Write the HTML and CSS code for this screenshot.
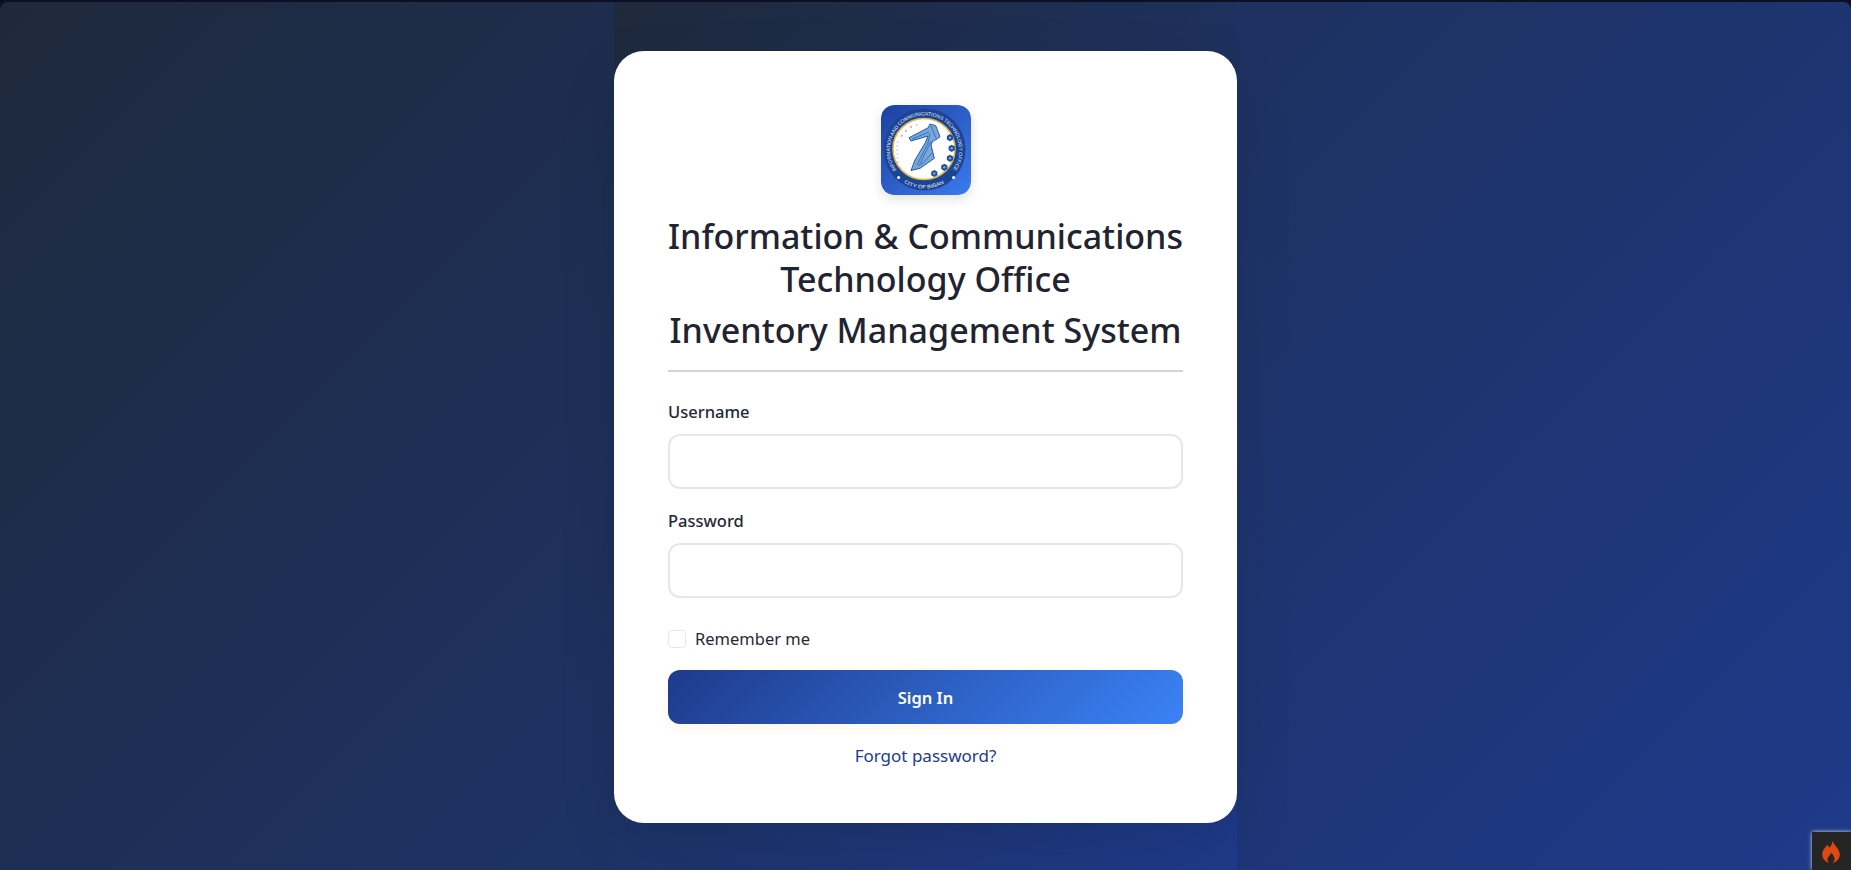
FILE: index.html
```html
<!DOCTYPE html>
<html lang="en">
<head>
    <meta charset="UTF-8">
    <meta name="viewport" content="width=device-width, initial-scale=1.0">
    <title>Inventory Management System</title>
    <link rel="stylesheet" href="styles.css">
</head>
<body>
    <div class="page">
        <main class="login-column">
            <div class="login-card">
                <svg class="logo" viewBox="0 0 90 90" role="img" aria-label="ICT Office seal">
                    <defs>
                        <linearGradient id="logoBg" x1="0" y1="0" x2="1" y2="1">
                            <stop offset="0" stop-color="#1e40a0"/>
                            <stop offset="1" stop-color="#3b7bee"/>
                        </linearGradient>
                        <path id="ringTop" d="M15.5 65 A34.5 34.5 0 1 1 71.5 65"/>
                        <path id="ringBottom" d="M23 77.7 A39 39 0 0 0 64 77.7"/>
                        <g id="badge">
                            <polygon points="0,-3.6 3.1,-1.8 3.1,1.8 0,3.6 -3.1,1.8 -3.1,-1.8" fill="#1d4f9f"/>
                            <circle r="1.2" fill="#7fa6d8"/>
                        </g>
                    </defs>
                    <rect width="90" height="90" rx="13" fill="url(#logoBg)"/>
                    <circle cx="43.5" cy="44.5" r="41" fill="#1b4494"/>
                    <ellipse cx="43" cy="44" rx="31" ry="30.5" fill="#fff" stroke="#e3b94a" stroke-width="1.6"/>
                    <text class="seal-text" textLength="150" lengthAdjust="spacingAndGlyphs"><textPath href="#ringTop">INFORMATION AND COMMUNICATIONS TECHNOLOGY OFFICE</textPath></text>
                    <text class="seal-text" textLength="42" lengthAdjust="spacingAndGlyphs"><textPath href="#ringBottom">CITY OF BIÑAN</textPath></text>
                    <path class="seal-ones" d="M16 57 h2 M15.6 53 h2 M15.3 49 h2 M15.2 45 h2 M15.3 41 h2 M15.8 37 h2"/>
                    <g class="seal-zeros">
                        <circle cx="20.7" cy="30.7" r=".8"/>
                        <circle cx="25" cy="26" r=".8"/>
                        <circle cx="30" cy="22" r=".8"/>
                    </g>
                    <path class="seal-ones" d="M35.7 19 v2"/>
                    <path class="seal-key" d="M28 32.7 L47.3 22.7 L49 19 L54.7 20.7 L59 31.7 L56 34 L51.5 36.5 L50 40 L53.3 53.3 L39 63.3 L30 65.5 L34 55 L44 38.3 L47 31 L30 36 Z"/>
                    <path class="seal-key-lines" d="M31 34 L48 27 M50 21 L55 33 M49 28 L47 38 L36 60 M50 36 L38 61 M51 48 L40 60"/>
                    <use href="#badge" x="69" y="32.7"/>
                    <use href="#badge" x="70.7" y="43.3"/>
                    <use href="#badge" x="69" y="53.3"/>
                    <use href="#badge" x="63.3" y="62.3"/>
                    <use href="#badge" x="53.3" y="68.5"/>
                    <circle cx="17.6" cy="72.6" r="1.5" fill="#fff"/>
                    <circle cx="72.6" cy="72.6" r="1.5" fill="#fff"/>
                </svg>
                <h1 class="org-title">Information &amp; Communications<br>Technology Office</h1>
                <h2 class="app-title">Inventory Management System</h2>
                <form class="login-form">
                    <label class="field-label" for="username">Username</label>
                    <input class="field-input" type="text" id="username" name="username">
                    <label class="field-label" for="password">Password</label>
                    <input class="field-input" type="password" id="password" name="password">
                    <label class="remember">
                        <input class="remember-box" type="checkbox" name="remember">
                        Remember me
                    </label>
                    <button class="sign-in" type="button">Sign In</button>
                </form>
                <a class="forgot" href="#">Forgot password?</a>
            </div>
        </main>
    </div>
    <div class="debug-toolbar">
        <svg class="debug-flame" viewBox="0 0 16 21" aria-hidden="true">
            <path fill-rule="evenodd" d="M8.6 0 C9.6 3.2 8.4 5 6.6 7 C5.8 6.2 5.2 5.4 5 4.4 C2 7 0 9.6 0 13 C0 17 2.8 20 6.4 21 C4.6 19.6 4.2 17.4 5.4 15.6 C6.2 14.4 7.6 13.6 8 11.6 C9.6 13 11 15 11.2 17 C11.3 18.6 10.6 20 9.6 21 C13.2 20 16 17 16 13.4 C16 8 11.4 5.6 8.6 0 Z"/>
        </svg>
    </div>
</body>
</html>
```

FILE: styles.css
```css
* {
    box-sizing: border-box;
}
body {
    margin: 0;
    height: 870px;
    overflow: hidden;
    background-color: #0b1025;
    font-family: "Noto Sans", "Open Sans", sans-serif;
    color: #1f2937;
}
.page {
    height: 868px;
    margin-top: 2px;
    display: flex;
    justify-content: center;
    border-radius: 8px 8px 0 0;
    background: linear-gradient(135deg, #1e293b 0%, #1e3a8a 100%);
}
.login-column {
    width: 623px;
    padding-top: 2px;
    display: flex;
    align-items: center;
    background: linear-gradient(135deg, #1e293b 0%, #1e3a8a 100%);
}
.login-card {
    width: 100%;
    height: 772px;
    padding: 54px;
    display: flex;
    flex-direction: column;
    align-items: center;
    background-color: #ffffff;
    border-radius: 30px;
    box-shadow: 0 20px 60px rgba(0, 0, 0, 0.1);
}
.logo {
    display: block;
    width: 90px;
    height: 90px;
    flex: none;
    border-radius: 13px;
    box-shadow: 0 4px 12px rgba(0, 0, 0, 0.12);
}
.seal-text {
    font-family: "Liberation Sans", sans-serif;
    font-size: 5px;
    fill: #e8f0fb;
}
.seal-ones {
    fill: none;
    stroke: #8a94a3;
    stroke-width: 0.6;
}
.seal-zeros {
    fill: none;
    stroke: #6f7b8c;
    stroke-width: 0.5;
}
.seal-key {
    fill: #7ba6da;
    stroke: #1f5aa8;
    stroke-width: 1;
    stroke-linejoin: round;
}
.seal-key-lines {
    fill: none;
    stroke: #2a66b2;
    stroke-width: 0.8;
}
.org-title,
.app-title {
    margin: 0;
    width: 100%;
    font-size: 34px;
    font-weight: 500;
    line-height: 43px;
    text-align: center;
    white-space: nowrap;
    color: #1f2430;
}
.org-title {
    margin-top: 20px;
}
.app-title {
    margin-top: 8px;
    padding-bottom: 18px;
    border-bottom: 2px solid #d1d5db;
}
.login-form {
    width: 100%;
    margin-top: 28px;
    display: flex;
    flex-direction: column;
}
.field-label {
    font-size: 16.5px;
    font-weight: 500;
    line-height: 24px;
    color: #1f2937;
}
.field-input {
    height: 55px;
    margin: 10px 0 20px;
    padding: 0 16px;
    border: 2px solid #e5e7eb;
    border-radius: 12px;
    background-color: #ffffff;
}
.remember {
    display: flex;
    align-items: center;
    gap: 9px;
    margin-top: 9px;
    font-size: 16.5px;
    line-height: 24px;
    color: #1f2937;
}
.remember-box {
    appearance: none;
    width: 18px;
    height: 18px;
    margin: 0;
    border: 1px solid #e5e7eb;
    border-radius: 4px;
    background-color: #ffffff;
}
.sign-in {
    height: 54px;
    margin-top: 19px;
    border: none;
    border-radius: 12px;
    font-family: inherit;
    font-size: 16.5px;
    font-weight: 600;
    color: #ffffff;
    background: linear-gradient(135deg, #1e3a8a 0%, #3b82f6 100%);
    box-shadow: 0 4px 12px rgba(245, 158, 11, 0.1);
}
.forgot {
    margin-top: 20px;
    font-size: 17px;
    line-height: 24px;
    color: #1e3a8a;
    text-decoration: none;
}
.debug-toolbar {
    position: fixed;
    right: 0;
    bottom: 0;
    width: 39px;
    height: 38px;
    padding: 8px 0 0 10px;
    background-color: #252525;
    box-shadow: 0 0 4px #dfdfdf;
}
.debug-flame {
    display: block;
    width: 18px;
    height: 23px;
    fill: #dd4814;
}
```
